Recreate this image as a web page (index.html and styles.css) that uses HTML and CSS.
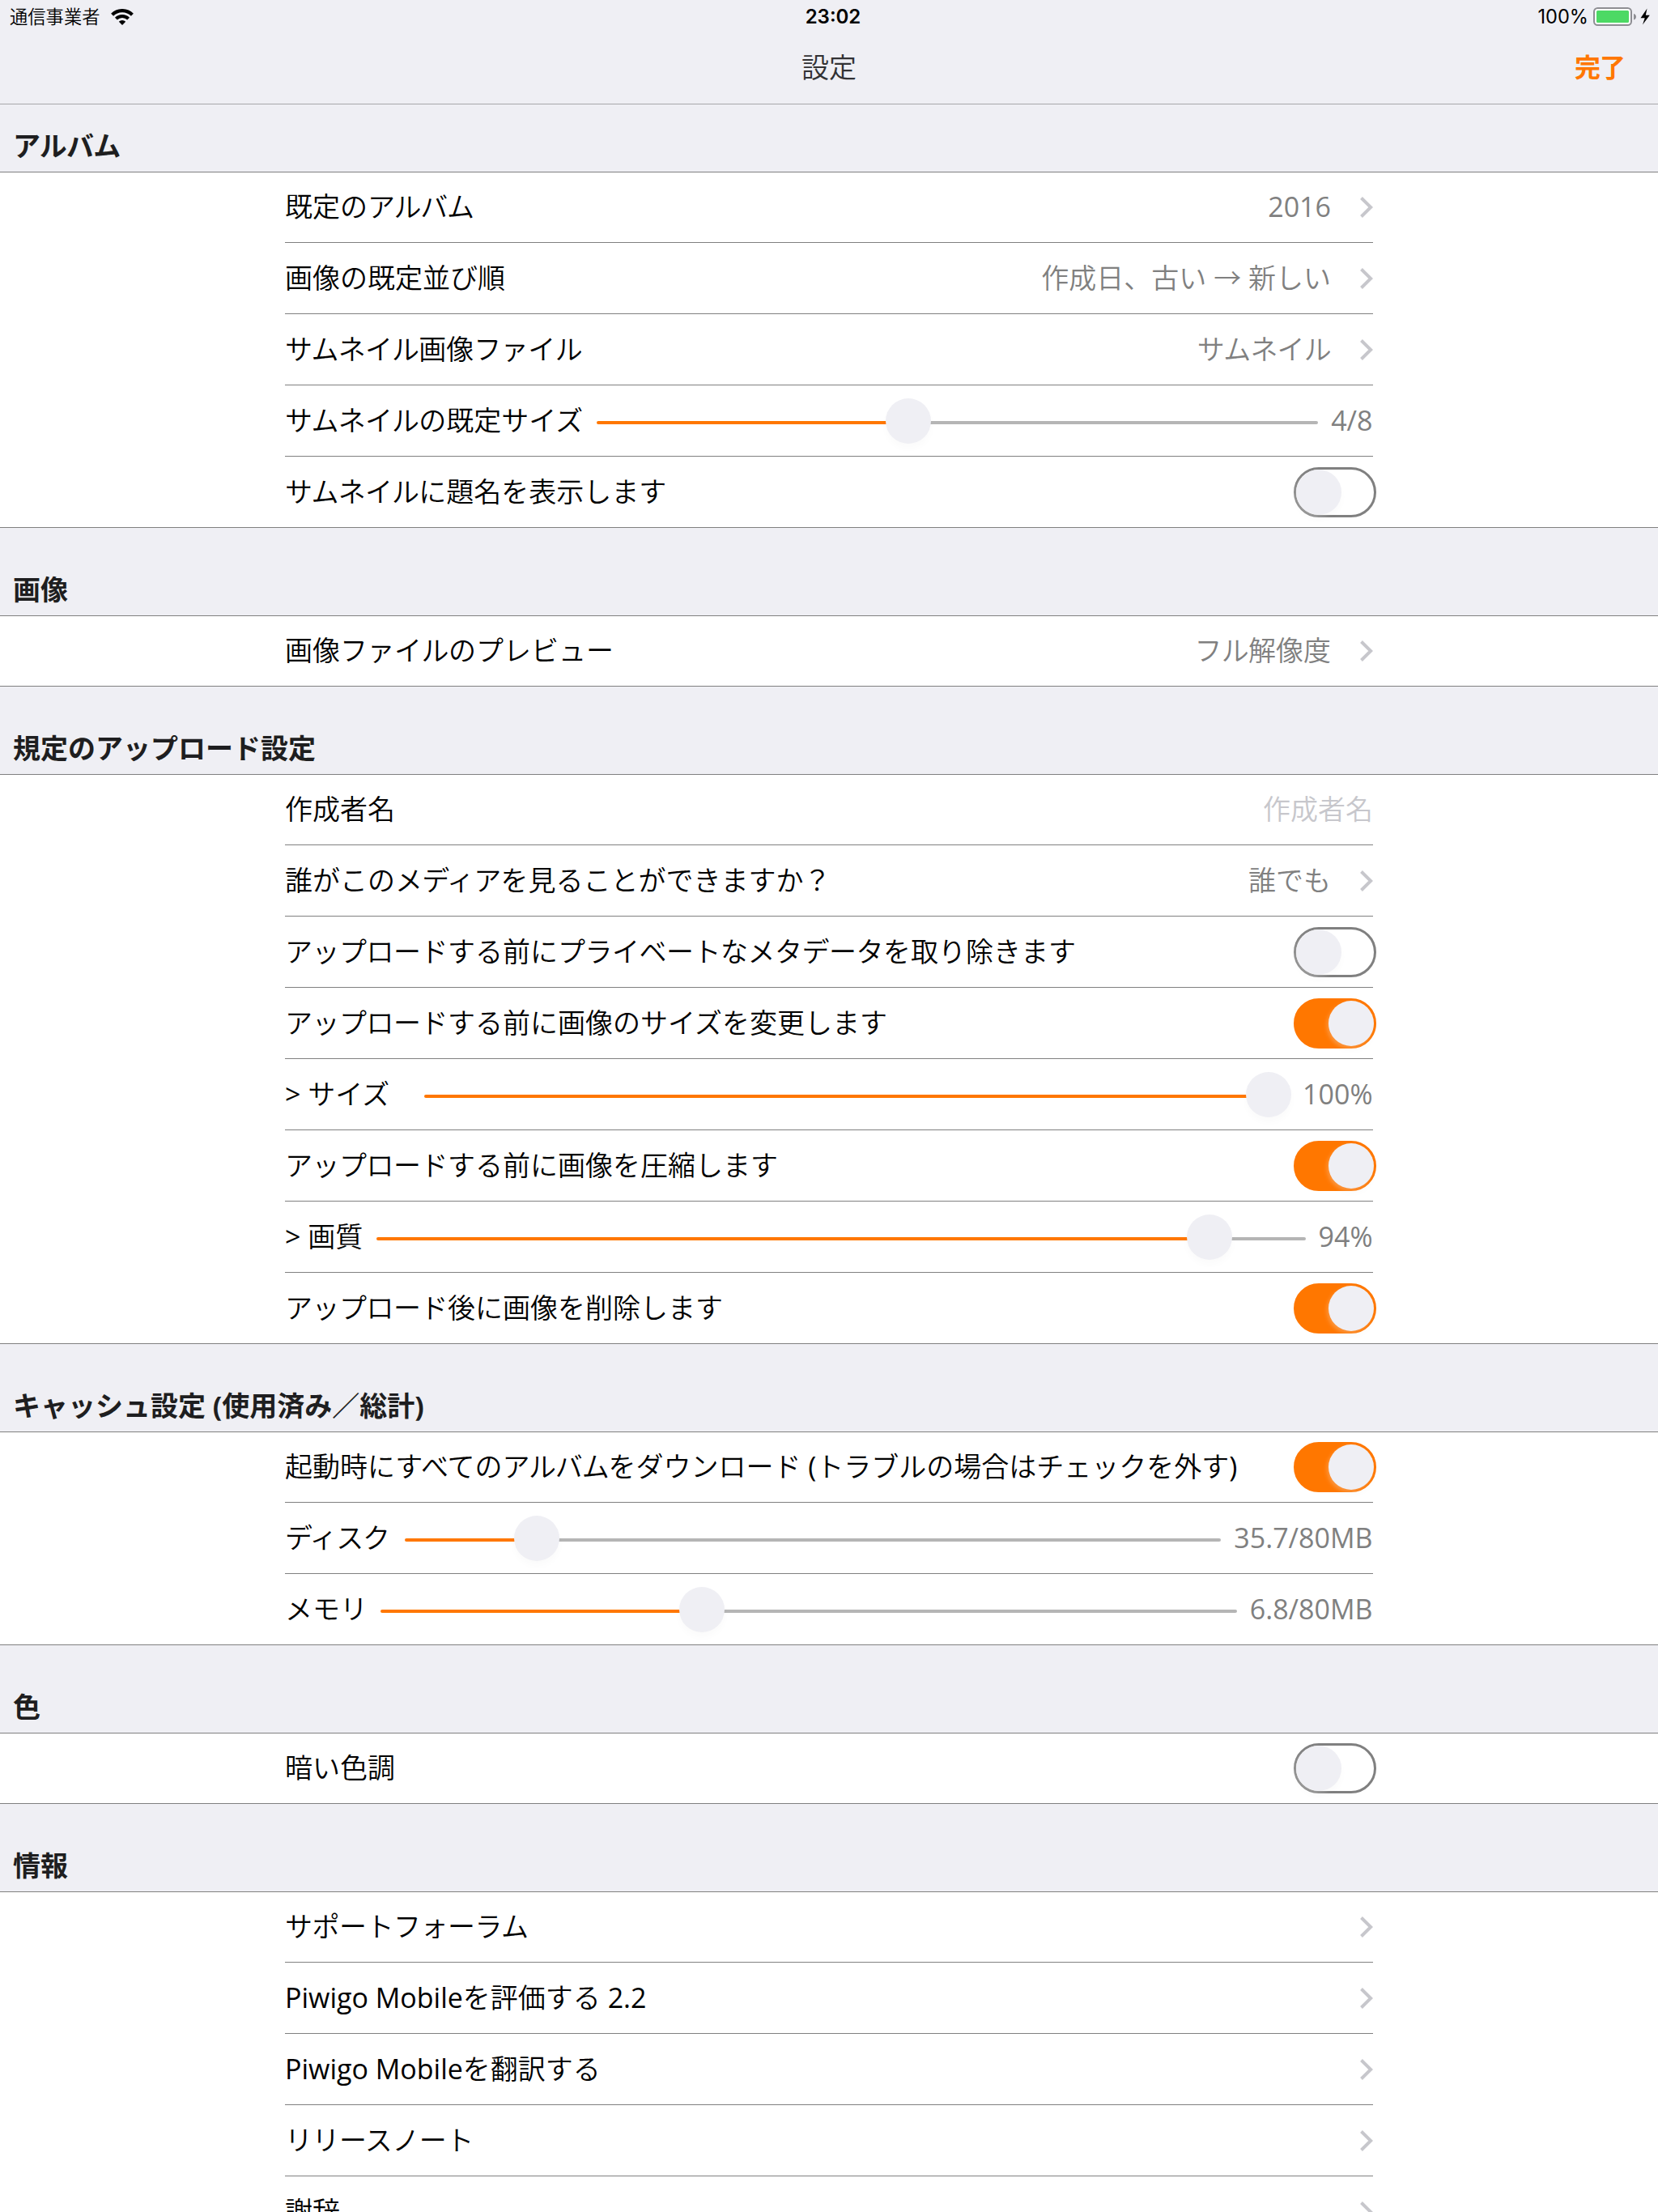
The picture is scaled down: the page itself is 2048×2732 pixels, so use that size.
FILE: index.html
```html
<!DOCTYPE html>
<html lang="ja">
<head>
<meta charset="utf-8">
<title>設定</title>
<link rel="stylesheet" href="styles.css">
</head>
<body>
<svg class="defs" width="0" height="0" aria-hidden="true">
  <symbol id="chevron" viewBox="0 0 16 26"><path d="M1.5 1.5 13.2 13 1.5 24.5" fill="none" stroke="#c7c7cc" stroke-width="4"/></symbol>
</svg>
<header class="top">
  <div class="status">
    <div class="status-left">
      <span class="carrier">通信事業者</span>
      <svg class="wifi" width="28" height="20" viewBox="0 0 28 20">
        <path d="M1.6 7.2A17.6 17.6 0 0 1 26.4 7.2" fill="none" stroke="#000" stroke-width="4.2"/>
        <path d="M6.4 12.2A10.8 10.8 0 0 1 21.6 12.2" fill="none" stroke="#000" stroke-width="4"/>
        <path d="M14 20 9.8 15.8A6 6 0 0 1 18.2 15.8Z" fill="#000"/>
      </svg>
    </div>
    <span class="time">23:02</span>
    <div class="status-right">
      <span class="percent">100%</span>
      <svg class="battery" width="72" height="24" viewBox="0 0 72 24">
        <rect x="1" y="1" width="46" height="21" rx="4.5" fill="#fff" stroke="#8e8e93" stroke-width="2"/>
        <rect x="4" y="4" width="40" height="15" rx="1.5" fill="#4cd964"/>
        <path d="M50 8c4 1 4 6.500 0 7.500z" fill="#8e8e93"/>
        <path d="M66.500 1.500 58.500 13.200h5.200L61 21.500 69.800 9.800h-5z" fill="#000"/>
      </svg>
    </div>
  </div>
  <div class="nav">
    <h1 class="title">設定</h1>
    <a class="done">完了</a>
  </div>
</header>
<main>
  <h2 class="heading heading-first"><span class="kana">アルバム</span></h2>
  <section class="group">
    <div class="row"><span class="label">既定の<span class="kana-tight">アルバム</span></span><span class="value">2016</span><svg class="chev"><use href="#chevron"/></svg></div>
    <div class="row"><span class="label">画像の既定並び順</span><span class="value">作成日、古い → 新しい</span><svg class="chev"><use href="#chevron"/></svg></div>
    <div class="row"><span class="label"><span class="kana">サムネイル</span>画像<span class="kana-loose">ファイル</span></span><span class="value"><span class="kana">サムネイル</span></span><svg class="chev"><use href="#chevron"/></svg></div>
    <div class="row"><span class="label label-thumbs"><span class="kana">サムネイル</span>の既定サイズ</span><div class="slider" style="--pos:43.2%"><i class="knob"></i></div><span class="amount">4/8</span></div>
    <div class="row"><span class="label"><span class="kana">サムネイル</span>に題名を表示します</span><div class="switch"></div></div>
  </section>

  <h2 class="heading">画像</h2>
  <section class="group">
    <div class="row"><span class="label">画像<span class="kana-loose">ファイル</span>のプレビュー</span><span class="value"><span class="kana">フル</span>解像度</span><svg class="chev"><use href="#chevron"/></svg></div>
  </section>

  <h2 class="heading">規定のアップロード設定</h2>
  <section class="group">
    <div class="row"><span class="label">作成者名</span><span class="placeholder">作成者名</span></div>
    <div class="row"><span class="label">誰がこの<span class="kana">メディア</span>を見ることができますか？</span><span class="value">誰でも</span><svg class="chev"><use href="#chevron"/></svg></div>
    <div class="row"><span class="label"><span class="kana-loose">アップロード</span>する前に<span class="kana-loose">プライベートなメタデータ</span>を取り除きます</span><div class="switch"></div></div>
    <div class="row"><span class="label"><span class="kana-loose">アップロード</span>する前に画像のサイズを変更します</span><div class="switch on"></div></div>
    <div class="row"><span class="label label-size">&gt; サイズ</span><div class="slider slider-full" style="--pos:100%"><i class="knob"></i></div><span class="amount">100%</span></div>
    <div class="row"><span class="label"><span class="kana-loose">アップロード</span>する前に画像を圧縮します</span><div class="switch on"></div></div>
    <div class="row"><span class="label label-quality">&gt; 画質</span><div class="slider" style="--pos:89.7%"><i class="knob"></i></div><span class="amount">94%</span></div>
    <div class="row"><span class="label"><span class="kana-loose">アップロード</span>後に画像を削除します</span><div class="switch on"></div></div>
  </section>

  <h2 class="heading">キャッシュ設定 (使用済み／総計)</h2>
  <section class="group">
    <div class="row"><span class="label">起動時にすべての<span class="kana-tight">アルバム</span>をダウンロード (トラブルの場合はチェックを外す)</span><div class="switch on"></div></div>
    <div class="row"><span class="label label-disk"><span class="kana-tight">ディスク</span></span><div class="slider" style="--pos:16.2%"><i class="knob"></i></div><span class="amount">35.7/80MB</span></div>
    <div class="row"><span class="label label-memory">メモリ</span><div class="slider" style="--pos:37.5%"><i class="knob"></i></div><span class="amount">6.8/80MB</span></div>
  </section>

  <h2 class="heading">色</h2>
  <section class="group">
    <div class="row"><span class="label">暗い色調</span><div class="switch"></div></div>
  </section>

  <h2 class="heading">情報</h2>
  <section class="group">
    <div class="row"><span class="label"><span class="kana-loose">サポートフォーラム</span></span><svg class="chev"><use href="#chevron"/></svg></div>
    <div class="row"><span class="label">Piwigo Mobileを評価する 2.2</span><svg class="chev"><use href="#chevron"/></svg></div>
    <div class="row"><span class="label">Piwigo Mobileを翻訳する</span><svg class="chev"><use href="#chevron"/></svg></div>
    <div class="row"><span class="label"><span class="kana-loose">リリースノート</span></span><svg class="chev"><use href="#chevron"/></svg></div>
    <div class="row"><span class="label">謝辞</span><svg class="chev"><use href="#chevron"/></svg></div>
  </section>
</main>
</body>
</html>
```
FILE: styles.css
```css
* { box-sizing: border-box; }
html, body { margin: 0; height: 2732px; overflow: hidden; }
body {
  background: #efeff4;
  color: #000;
  font: 400 34px/48px "Open Sans", "Noto Sans CJK JP DemiLight", "Noto Sans CJK JP", sans-serif;
}
.defs { display: block; }

.top { height: 129px; border-bottom: 1px solid #a7a7aa; }
.status {
  display: grid;
  grid-template-columns: 1fr auto 1fr;
  align-items: center;
  height: 40px;
  padding: 0 8px 0 12px;
  font: 400 24px/40px Inter, "Noto Sans CJK JP DemiLight", "Noto Sans CJK JP", sans-serif;
}
.status-left, .status-right { display: flex; align-items: center; height: 40px; }
.status-left { gap: 13px; }
.status-right { justify-content: flex-end; gap: 6px; }
.carrier { padding-top: 1px; font-size: 22.3px; }
.percent { padding-top: 1px; font-size: 23.6px; }
.time { padding: 1px 0 0 6px; font-weight: 600; }
.nav { display: grid; grid-template-columns: 1fr auto 1fr; padding: 19px 41px 0; }
.title { grid-column: 2; margin: 0; font-size: 34px; font-weight: 400; color: #323234; }
.done {
  justify-self: end;
  font-family: "Open Sans", "Noto Sans CJK JP", sans-serif;
  font-size: 32px;
  font-weight: 600;
  letter-spacing: -1px;
  color: #ff7700;
}

.heading {
  margin: 0;
  height: 108px;
  padding: 52px 16px 0;
  font-family: "Open Sans", "Noto Sans CJK JP", sans-serif;
  font-size: 34px;
  font-weight: 700;
  line-height: 48px;
  color: #1e1e20;
}
.heading-first { height: 83px; padding-top: 27px; }

/* katakana runs are set slightly closer than the full-width pitch */
.kana { letter-spacing: -0.8px; }
.kana-tight { letter-spacing: -1.2px; }
.kana-loose { letter-spacing: -0.5px; }

.group {
  background: #fff;
  border-top: 1px solid #808080;
  border-bottom: 1px solid #808080;
}
.row {
  display: flex;
  align-items: center;
  height: 88px;
  margin: 0 352px;
  border-bottom: 1px solid #808080;
  white-space: nowrap;
}
.row:first-child { height: 87px; }
.row:last-child { height: 87px; border-bottom: 0; }
.row:first-child:last-child { height: 86px; }
.label { margin-right: auto; padding-bottom: 2px; }
.value, .amount { color: #808080; padding-bottom: 2px; }
.value { padding-right: 1px; margin-right: -1px; }
.amount { padding-right: 0.5px; }
.placeholder { color: #c7c7cc; padding-bottom: 2px; }
.chev { width: 16px; height: 26px; margin-left: 36px; }

.label-thumbs, .label-size, .label-quality, .label-disk, .label-memory { margin-right: 0; }
.label-thumbs { flex: 0 0 385px; }
.label-size { flex: 0 0 172px; }
.label-quality { flex: 0 0 113px; }
.label-disk { flex: 0 0 148px; }
.label-memory { flex: 0 0 118px; }

.slider {
  position: relative;
  flex: 1;
  height: 56px;
  margin-right: 16px;
}
.slider::before {
  content: "";
  display: block;
  height: 4px;
  margin-top: 28px;
  border-radius: 2px;
  background: linear-gradient(to right, #ff7700 var(--pos), #b5b5b5 var(--pos));
}
.knob {
  position: absolute;
  top: 0;
  left: calc(var(--pos) - 28px);
  width: 56px;
  height: 56px;
  border-radius: 50%;
  background: #efeff4;
  box-shadow: 0 6px 10px rgba(0, 0, 0, 0.02);
}
.slider-full .knob { left: calc(100% - 54px); }

.switch {
  width: 102px;
  height: 62px;
  margin-right: -4px;
  border: 3px solid #808080;
  border-radius: 31px;
}
.switch::before {
  content: "";
  display: block;
  width: 56px;
  height: 56px;
  border-radius: 50%;
  background: #efeff4;
  box-shadow: 0 6px 10px rgba(0, 0, 0, 0.02), -2px 3px 5px rgba(255, 255, 255, 0.25);
}
.switch.on { border-color: #ff7700; background: #ff7700; }
.switch.on::before { margin-left: 40px; }
```
